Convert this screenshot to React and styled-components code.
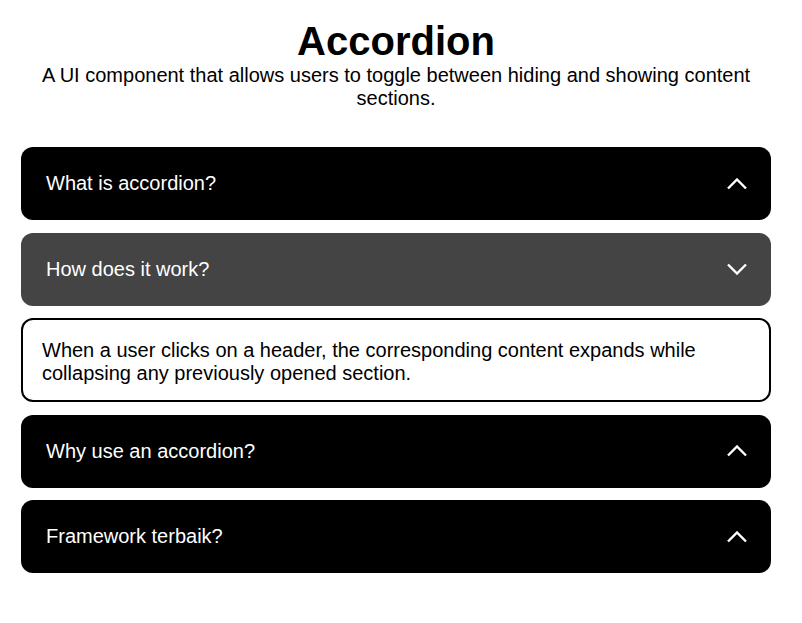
import { useState } from "react";
import styled, { createGlobalStyle } from "styled-components";

const items = [
  {
    title: "What is accordion?",
    content: "An accordion is a vertically stacked list of headers that reveal or hide content.",
  },
  {
    title: "How does it work?",
    content:
      "When a user clicks on a header, the corresponding content expands while collapsing any previously opened section.",
  },
  {
    title: "Why use an accordion?",
    content: "It saves space and keeps the page tidy.",
  },
  {
    title: "Framework terbaik?",
    content: "Semua framework punya kelebihan masing-masing.",
  },
];

export default function App() {
  const [open, setOpen] = useState(1);

  return (
    <>
      <GlobalStyle />
      <Container>
        <Title>Accordion</Title>
        <Subtitle>
          A UI component that allows users to toggle between hiding and showing content sections.
        </Subtitle>

        <List>
          {items.map((item, index) => (
            <Item key={index}>
              <Header $active={open === index} onClick={() => setOpen(open === index ? -1 : index)}>
                <span>{item.title}</span>
                <Chevron $down={open === index} />
              </Header>
              {open === index && <Content>{item.content}</Content>}
            </Item>
          ))}
        </List>
      </Container>
    </>
  );
}

function Chevron({ $down }) {
  return (
    <Icon width="20" height="12" viewBox="0 0 20 12" $down={$down}>
      <polyline points="1,10.5 10,1.5 19,10.5" fill="none" stroke="white" strokeWidth="2.4" />
    </Icon>
  );
}

const GlobalStyle = createGlobalStyle`
  body {
    margin: 0;
    background: #ffffff;
    font-family: "Liberation Sans", Arial, sans-serif;
  }
`;

const Container = styled.div`
  width: 750px;
  padding: 19px 0 40px 21px;
`;

const Title = styled.h1`
  margin: 0;
  font-size: 40px;
  font-weight: bold;
  text-align: center;
  color: #000;
`;

const Subtitle = styled.p`
  margin: 0;
  font-size: 20px;
  line-height: 23px;
  text-align: center;
  color: #000;
`;

const List = styled.div`
  margin-top: 37px;
  display: flex;
  flex-direction: column;
  gap: 12.5px;
`;

const Item = styled.div`
  display: flex;
  flex-direction: column;
  gap: 12.5px;
`;

const Header = styled.div`
  height: 73px;
  box-sizing: border-box;
  padding: 0 24px 0 25px;
  display: flex;
  align-items: center;
  justify-content: space-between;
  background-color: ${(p) => (p.$active ? "#444444" : "#000000")};
  color: #ffffff;
  font-size: 20px;
  border-radius: 12px;
  cursor: pointer;
`;

const Icon = styled.svg`
  transform: ${(p) => (p.$down ? "rotate(180deg)" : "none")};
`;

const Content = styled.div`
  box-sizing: border-box;
  border: 2px solid #000;
  border-radius: 12px;
  padding: 19px 19px 15px;
  font-size: 20px;
  line-height: 23px;
  color: #000;
`;
